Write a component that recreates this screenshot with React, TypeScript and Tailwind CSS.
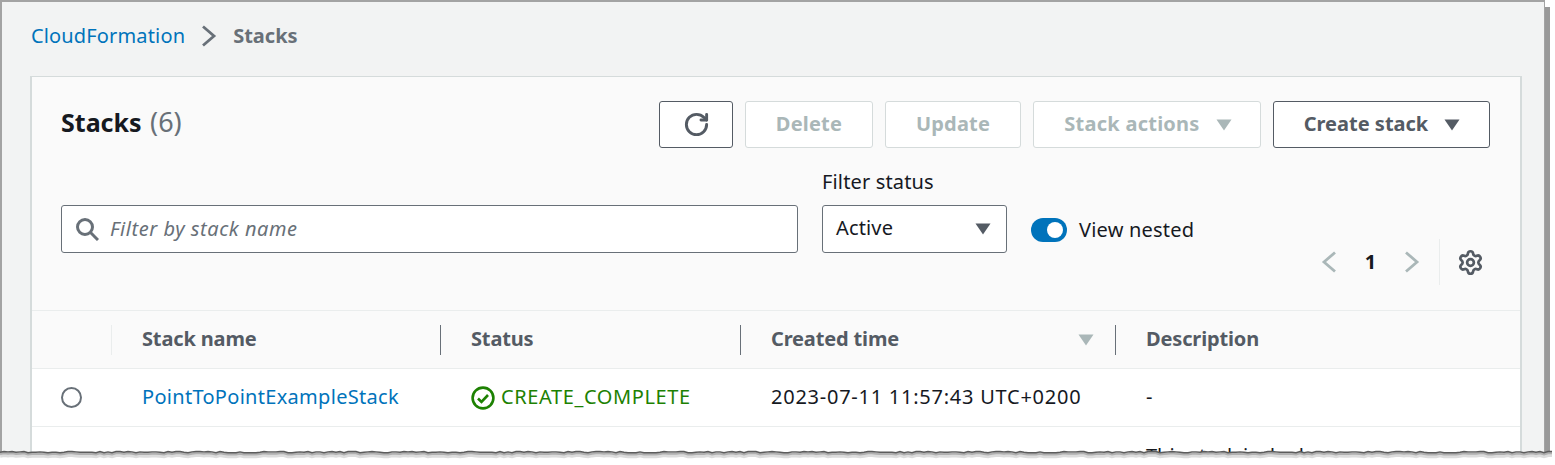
import React from "react";
import { RotateCw, Settings } from "lucide-react";

// jagged bottom edge of the screenshot
function tornPoints() {
  const pts: [number, number][] = [];
  let seed = 17;
  for (let x = 0; x <= 1555; x += 4) {
    seed = (seed * 73 + 41) % 101;
    pts.push([x, 6.5 + (seed % 4) * 0.4]);
  }
  return pts;
}

function TornEdge() {
  const pts = tornPoints();
  const line = pts.map(([x, y]) => `${x},${y}`).join(" ");
  const shadeWide = pts.map(([x, y]) => `${x},${y + 3}`).join(" ");
  const shade = pts.map(([x, y]) => `${x},${y + 1.5}`).join(" ");
  return (
    <svg className="absolute left-0 bottom-0" width="1555" height="20" viewBox="0 0 1555 20">
      <polygon points={`0,20 ${line} 1555,20`} fill="#ffffff" />
      <polyline points={shadeWide} fill="none" stroke="#dcdcdc" strokeWidth="5" />
      <polyline points={shade} fill="none" stroke="#b0b0b0" strokeWidth="2.5" />
      <polyline points={line} fill="none" stroke="#5c5c5c" strokeWidth="1.4" />
    </svg>
  );
}

function Caret({ color }: { color: string }) {
  return (
    <svg width="16" height="12" viewBox="0 0 16 12">
      <polygon points="0.5,0.5 15.5,0.5 8,11.5" fill={color} />
    </svg>
  );
}

function Chevron({ left, color, h = 22 }: { left?: boolean; color: string; h?: number }) {
  return (
    <svg width="16" height={h} viewBox="0 0 16 22" fill="none" stroke={color} strokeWidth="2.8">
      <path d={left ? "M14 1.5L3 11l11 9.5" : "M2 1.5L13 11 2 20.5"} />
    </svg>
  );
}

function Btn({ children, w, disabled }: { children: React.ReactNode; w: string; disabled?: boolean }) {
  return (
    <div
      className={
        disabled
          ? `${w} h-[47px] flex items-center justify-center gap-4 rounded-[3px] border border-[#d5dbdb] bg-white font-bold text-[#aab7b8]`
          : `${w} h-[47px] flex items-center justify-center gap-4 rounded-[3px] border border-[#545b64] bg-white font-bold text-[#545b64]`
      }
    >
      {children}
    </div>
  );
}

function HeaderCell({ w, label, divider, caret }: { w: string; label: string; divider?: boolean; caret?: boolean }) {
  return (
    <div className={`${w} h-[30px] flex items-center justify-between pl-[30px] pr-[21px] ${divider ? "border-l border-[#687078]" : "border-l border-[#eaeded]"}`}>
      <span className="font-bold text-[#545b64] tracking-[-0.15px] mb-[2px]">{label}</span>
      {caret && <Caret color="#aab7b8" />}
    </div>
  );
}

export default function App() {
  return (
    <div className="relative w-[1555px] h-[465px] overflow-hidden bg-white font-['Noto_Sans',sans-serif] text-[20px] leading-[28px] text-[#16191f]">
      <div className="w-[1545px] h-[465px] bg-[#f2f3f3] border-t-2 border-l-2 border-r border-[#a3a3a3] pl-[28px] pr-[22px] shadow-[5px_7px_0_#999999]">
        <nav className="h-[74px] flex items-center pb-[7px] pl-[1px]">
          <span className="text-[#0073bb] tracking-[0.15px]">CloudFormation</span>
          <span className="ml-[16px] mr-[16px]"><Chevron color="#687078" /></span>
          <span className="font-bold text-[#687078]">Stacks</span>
        </nav>

        <section className="border-l-2 border-r-2 border-t border-[#d5dbdb] bg-[#fafafa] h-[400px]">
          <div className="h-[234px] border-b border-[#eaeded] pl-[29px] pr-[30px] pt-[24px]">
            <div className="flex items-start justify-between">
              <h1 className="text-[25px] leading-[46px] font-bold mt-[-2px]">
                Stacks <span className="font-normal text-[#687078] text-[27px] ml-[2px]">(6)</span>
              </h1>
              <div className="flex gap-[12px]">
                <Btn w="w-[74px]"><RotateCw size={27} strokeWidth={2.6} className="text-[#545b64]" /></Btn>
                <Btn w="w-[128px]" disabled><span className="mb-[2px] tracking-[0.2px]">Delete</span></Btn>
                <Btn w="w-[136px]" disabled><span className="mb-[2px] tracking-[0.2px]">Update</span></Btn>
                <Btn w="w-[228px]" disabled><span className="mb-[2px] ml-[2px] tracking-[0.25px]">Stack actions</span> <Caret color="#aab7b8" /></Btn>
                <Btn w="w-[217px]"><span className="mb-[2px] ml-[1px]">Create stack</span> <Caret color="#545b64" /></Btn>
              </div>
            </div>
            <div className="flex mt-[20px]">
              <div className="w-[737px] h-[48px] mt-[37px] flex items-center gap-[12px] pl-[13px] rounded-[3px] border border-[#687078] bg-white">
                <svg width="24" height="24" viewBox="0 0 24 24" fill="none" stroke="#687078" strokeWidth="3">
                  <circle cx="10" cy="10" r="7.5" />
                  <path d="M15.5 15.5L23 23" />
                </svg>
                <span className="italic text-[#687078] tracking-[0.55px] -ml-[1px]">Filter by stack name</span>
              </div>
              <div className="ml-[24px] w-[185px]">
                <div className="h-[28px] mb-[9px] tracking-[0.15px]">Filter status</div>
                <div className="h-[48px] flex items-center justify-between pl-[13px] pr-[15px] rounded-[3px] border border-[#687078] bg-white">
                  <span className="mb-[2px] tracking-[0.15px]">Active</span>
                  <Caret color="#545b64" />
                </div>
              </div>
              <div className="flex-1 ml-[24px]">
                <div className="flex items-center gap-[12px] mt-[48px]">
                  <div className="w-[36px] h-[24px] rounded-full bg-[#0073bb] flex items-center justify-end pr-[4px]">
                    <div className="w-[16px] h-[16px] rounded-full bg-white" />
                  </div>
                  <span className="tracking-[0.2px]">View nested</span>
                </div>
                <div className="flex items-center justify-end h-[46px] mt-[-5px]">
                  <Chevron left color="#aab7b8" />
                  <span className="w-[67px] text-center font-bold">1</span>
                  <Chevron color="#aab7b8" />
                  <div className="ml-[19px] h-[46px] border-l border-[#eaeded] pl-[17px] pr-[6px] flex items-center">
                    <Settings size={27} strokeWidth={2.4} className="text-[#545b64]" />
                  </div>
                </div>
              </div>
            </div>
          </div>

          <div className="h-[58px] flex items-center border-b border-[#eaeded]">
            <div className="w-[79px]" />
            <HeaderCell w="w-[329px]" label="Stack name" divider={false} />
            <HeaderCell w="w-[300px]" label="Status" divider />
            <HeaderCell w="w-[375px]" label="Created time" divider caret />
            <HeaderCell w="w-[300px]" label="Description" divider />
          </div>

          <div className="h-[58px] flex items-center bg-white border-b border-[#eaeded]">
            <div className="w-[79px] pl-[29px]">
              <div className="w-[21px] h-[21px] rounded-full border-2 border-[#687078] bg-white" />
            </div>
            <div className="w-[329px] pl-[31px] text-[#0073bb] tracking-[0.3px] mb-[2px]">PointToPointExampleStack</div>
            <div className="w-[300px] pl-[31px] flex items-center gap-[6px] text-[#1d8102] tracking-[0.6px]">
              <svg width="24" height="24" viewBox="0 0 24 24" fill="none" stroke="#1d8102" strokeWidth="2.6">
                <circle cx="12" cy="12" r="10.4" />
                <path d="M7 12.5l3.5 3.5L17 9" />
              </svg>
              <span className="mb-[2px]">CREATE_COMPLETE</span>
            </div>
            <div className="w-[375px] pl-[31px] tracking-[0.75px] mb-[2px]">2023-07-11 11:57:43 UTC+0200</div>
            <div className="pl-[31px] mb-[2px]">-</div>
          </div>

          <div className="h-[60px] bg-white flex justify-end pt-[15px]">
            <div className="w-[374px]">This stack is deplo</div>
          </div>
        </section>
      </div>
      <TornEdge />
    </div>
  );
}
